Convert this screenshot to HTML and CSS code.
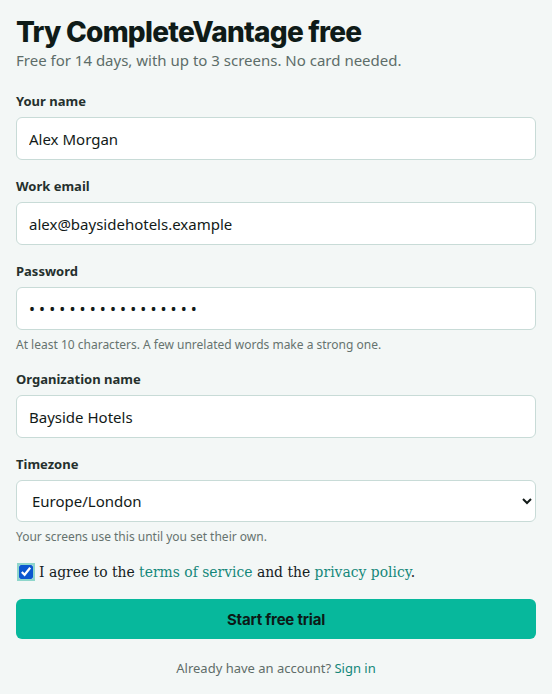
FILE: index.html
```html
<!DOCTYPE html>
<html lang="en">
<head>
<meta charset="utf-8">
<title>Try CompleteVantage free</title>
<link rel="stylesheet" href="styles.css">
</head>
<body>
<main class="page">
  <header class="head">
    <h1 class="title">Try CompleteVantage free</h1>
    <p class="sub">Free for 14 days, with up to 3 screens. No card needed.</p>
  </header>
  <form class="form">
    <div class="field">
      <label class="label" for="name">Your name</label>
      <input class="input" id="name" type="text" value="Alex Morgan">
    </div>
    <div class="field">
      <label class="label" for="email">Work email</label>
      <input class="input" id="email" type="email" value="alex@baysidehotels.example">
    </div>
    <div class="field">
      <label class="label" for="pw">Password</label>
      <input class="input pw" id="pw" type="password" value="abcdefghijklmnopq">
      <p class="hint">At least 10 characters. A few unrelated words make a strong one.</p>
    </div>
    <div class="field">
      <label class="label" for="org">Organization name</label>
      <input class="input" id="org" type="text" value="Bayside Hotels">
    </div>
    <div class="field">
      <label class="label" for="tz">Timezone</label>
      <select class="input select" id="tz">
        <option>Europe/London</option>
        <option>Europe/Paris</option>
        <option>America/New_York</option>
      </select>
      <p class="hint">Your screens use this until you set their own.</p>
    </div>
    <label class="agree">
      <input class="check" type="checkbox" checked>
      <span>I agree to the <a href="#" class="link">terms of service</a> and the <a href="#" class="link">privacy policy</a>.</span>
    </label>
    <button class="btn" type="button">Start free trial</button>
    <p class="signin">Already have an account? <a href="#" class="link">Sign in</a></p>
  </form>
</main>
</body>
</html>
```
FILE: styles.css
```css
html, body {
  margin: 0;
  padding: 0;
  background: #f3f7f6;
}
body {
  font-family: "Noto Sans", "Open Sans", sans-serif;
  color: #15211e;
}
.page {
  padding: 16px 16px 0;
  display: flex;
  flex-direction: column;
}
.head {
  display: flex;
  flex-direction: column;
  gap: 2px;
}
.title {
  margin: 0;
  font-family: Inter, sans-serif;
  font-weight: 800;
  font-size: 28px;
  line-height: 32px;
  letter-spacing: -0.75px;
  color: #0f1b18;
}
.sub {
  margin: 0;
  font-size: 15px;
  line-height: 20px;
  color: #5d6d69;
}
.form {
  margin-top: 23px;
  display: flex;
  flex-direction: column;
}
.field {
  display: flex;
  flex-direction: column;
  margin-bottom: 18px;
}
.label {
  font-size: 13px;
  line-height: 16px;
  font-weight: 700;
  color: #25302d;
  margin-bottom: 8px;
}
.input {
  box-sizing: border-box;
  height: 43px;
  width: 100%;
  border: 1px solid #c8dbd7;
  border-radius: 6px;
  background: #fff;
  padding: 0 12px;
  font-family: "Noto Sans", "Open Sans", sans-serif;
  font-size: 15px;
  color: #121a18;
  outline: none;
}
.pw {
  font-size: 16px;
  letter-spacing: 4.1px;
}
.select {
  height: 42px;
  padding: 0 8px 0 11px;
}
.hint {
  margin: 7px 0 0;
  font-size: 12px;
  line-height: 16px;
  color: #66736f;
}
.agree {
  display: flex;
  align-items: center;
  gap: 6px;
  margin: 1px 0 19px 3px;
  font-family: "DejaVu Serif", serif;
  font-size: 13.9px;
  color: #15211e;
}
.check {
  margin: 0;
  width: 14px;
  height: 14px;
  accent-color: #0b57d0;
  outline: 2px solid #8fd6cb;
}
.link {
  color: #14877a;
  text-decoration: none;
}
.btn {
  height: 40px;
  border: none;
  border-radius: 6px;
  background: #07b89c;
  font-family: Inter, sans-serif;
  font-weight: 700;
  font-size: 15px;
  color: #0c1a17;
  letter-spacing: -0.2px;
}
.signin {
  margin: 20px 0 0;
  text-align: center;
  font-size: 13px;
  color: #5f6d69;
}
```
